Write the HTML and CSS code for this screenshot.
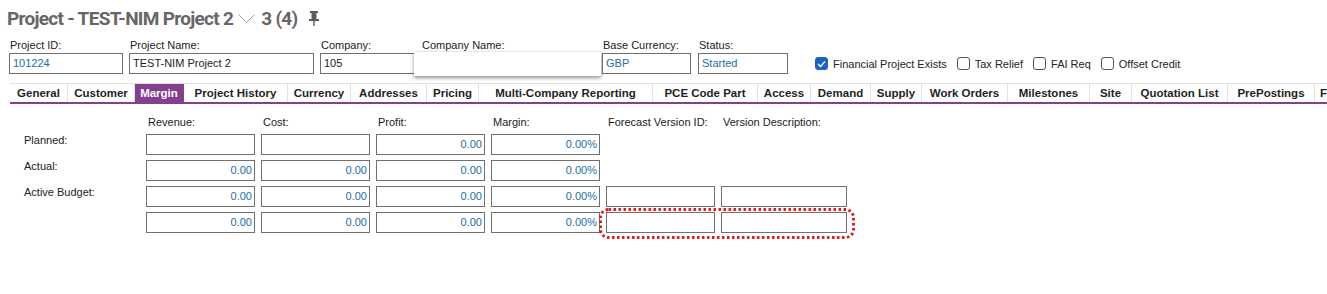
FILE: index.html
```html
<!DOCTYPE html>
<html lang="en">
<head>
<meta charset="utf-8"/>
<title>Project - TEST-NIM Project 2</title>
<link rel="stylesheet" href="styles.css">
</head>
<body>
<header class="title-bar">
    <h1 class="title">Project - TEST-NIM Project 2</h1>
    <svg class="chevron" width="17" height="10" viewBox="0 0 17 10"><polyline points="0.5,0.5 8.5,8.5 16.5,0.5" fill="none" stroke="#a0a0a0" stroke-width="1"/></svg>
    <span class="title">3 (4)</span>
    <svg class="pin" width="12" height="15" viewBox="0 0 12 15">
        <rect x="2" y="0" width="8" height="2" fill="#5a5a5a"/>
        <rect x="3.5" y="2" width="5" height="6" fill="#5a5a5a"/>
        <rect x="1" y="8" width="10" height="2" fill="#5a5a5a"/>
        <rect x="5.3" y="10" width="1.4" height="5" fill="#5a5a5a"/>
    </svg>
</header>

<section class="fields">
    <div class="field w-id">
        <label>Project ID:</label>
        <div class="box link">101224</div>
    </div>
    <div class="field w-name">
        <label>Project Name:</label>
        <div class="box">TEST-NIM Project 2</div>
    </div>
    <div class="field w-company">
        <label>Company:</label>
        <div class="box">105</div>
    </div>
    <div class="field w-compname">
        <label>Company Name:</label>
        <div class="box"></div>
        <div class="popup"></div>
    </div>
    <div class="field w-currency">
        <label>Base Currency:</label>
        <div class="box link">GBP</div>
    </div>
    <div class="field w-status">
        <label>Status:</label>
        <div class="box link">Started</div>
    </div>
    <div class="checks">
        <div class="check"><span class="tick on"><svg width="9" height="8" viewBox="0 0 9 8"><polyline points="1,4 3.5,6.5 8,1.5" fill="none" stroke="#fff" stroke-width="1.3"/></svg></span>Financial Project Exists</div>
        <div class="check"><span class="tick"></span>Tax Relief</div>
        <div class="check"><span class="tick"></span>FAI Req</div>
        <div class="check"><span class="tick"></span>Offset Credit</div>
    </div>
</section>

<nav class="tabs">
    <div class="tab">General</div>
    <div class="tab">Customer</div>
    <div class="tab active">Margin</div>
    <div class="tab">Project History</div>
    <div class="tab">Currency</div>
    <div class="tab">Addresses</div>
    <div class="tab">Pricing</div>
    <div class="tab">Multi-Company Reporting</div>
    <div class="tab">PCE Code Part</div>
    <div class="tab">Access</div>
    <div class="tab">Demand</div>
    <div class="tab">Supply</div>
    <div class="tab">Work Orders</div>
    <div class="tab">Milestones</div>
    <div class="tab">Site</div>
    <div class="tab">Quotation List</div>
    <div class="tab">PrePostings</div>
    <div class="tab tab-last">F</div>
</nav>

<section class="margin">
    <div class="grid">
        <div></div>
        <div class="col-head">Revenue:</div>
        <div class="col-head">Cost:</div>
        <div class="col-head">Profit:</div>
        <div class="col-head">Margin:</div>
        <div class="col-head">Forecast Version ID:</div>
        <div class="col-head">Version Description:</div>

        <div class="row-head">Planned:</div>
        <div class="box num"></div>
        <div class="box num"></div>
        <div class="box num">0.00</div>
        <div class="box num">0.00%</div>
        <div></div>
        <div></div>

        <div class="row-head">Actual:</div>
        <div class="box num">0.00</div>
        <div class="box num">0.00</div>
        <div class="box num">0.00</div>
        <div class="box num">0.00%</div>
        <div></div>
        <div></div>

        <div class="row-head">Active Budget:</div>
        <div class="box num">0.00</div>
        <div class="box num">0.00</div>
        <div class="box num">0.00</div>
        <div class="box num">0.00%</div>
        <div class="box"></div>
        <div class="box"></div>

        <div></div>
        <div class="box num">0.00</div>
        <div class="box num">0.00</div>
        <div class="box num">0.00</div>
        <div class="box num">0.00%</div>
        <div class="box"></div>
        <div class="box"></div>
    </div>
    <svg class="highlight" width="256" height="31" viewBox="0 0 256 31">
        <rect x="1.5" y="1.5" width="253" height="28" rx="8" ry="8" fill="none" stroke="#e01b1b" stroke-width="3" stroke-dasharray="2.5 2.5"/>
    </svg>
</section>
</body>
</html>
```

FILE: styles.css
```css
body {
    margin: 0;
    background: #fff;
    font-family: "Liberation Sans", Arial, sans-serif;
    font-size: 11px;
    color: #222;
}

/* Title */
.title-bar {
    display: flex;
    align-items: center;
    height: 36px;
    padding-left: 7px;
    color: #6b6b6b;
}
.title {
    margin: 0;
    font-family: Roboto, "Liberation Sans", sans-serif;
    font-size: 19px;
    letter-spacing: -0.7px;
    font-weight: bold;
    color: #666;
}
.chevron {
    margin: 2px 6px 0 5px;
}
.pin {
    margin-left: 10px;
}

/* Header fields */
.fields {
    display: flex;
    align-items: flex-end;
    gap: 6px;
    padding-left: 9px;
    margin-top: 3px;
}
.field {
    position: relative;
    display: flex;
    flex-direction: column;
    gap: 1px;
}
.field label {
    line-height: 13px;
    padding-left: 1px;
}
.w-id { width: 114px; }
.w-name { width: 185px; }
.w-company { width: 95px; }
.w-compname { width: 175px; }
.w-currency { width: 89px; }
.w-status { width: 90px; margin-left: 1px; }

.box {
    box-sizing: border-box;
    height: 21px;
    border: 1px solid #707070;
    background: #fff;
    padding: 0 3px;
    line-height: 19px;
    white-space: nowrap;
    overflow: hidden;
}
.link {
    color: #1c6ea4;
}
.popup {
    position: absolute;
    left: -7px;
    bottom: -2px;
    width: 187px;
    height: 24px;
    background: #fff;
    box-shadow: 0 2px 4px rgba(0, 0, 0, 0.4), 1px 0 2px rgba(0, 0, 0, 0.15);
}

.checks {
    display: flex;
    align-items: center;
    gap: 10px;
    height: 21px;
    margin-left: 21px;
}
.check {
    display: flex;
    align-items: center;
    gap: 5px;
}
.tick {
    box-sizing: border-box;
    width: 13px;
    height: 13px;
    border: 1px solid #555;
    border-radius: 3px;
    display: flex;
    align-items: center;
    justify-content: center;
}
.tick.on {
    background: #1d62c2;
    border-color: #1d62c2;
}

/* Tabs */
.tabs {
    display: grid;
    grid-template-columns: 58px 67px 49px 104px 63px 76px 52px 174px 105px 53px 60px 51px 86px 82px 42px 96px 87px 1fr;
    margin: 9px 0 0 10px;
    border-top: 1px solid #e2e2e2;
    border-bottom: 2px solid #843f8d;
}
.tab {
    height: 18px;
    line-height: 18px;
    text-align: center;
    font-weight: bold;
    font-size: 11.5px;
    color: #1f1f1f;
    border-right: 1px solid #e2e2e2;
    white-space: nowrap;
    overflow: hidden;
}
.tab.active {
    background: #843f8d;
    color: #fff;
    border-right-color: #843f8d;
}
.tab-last {
    text-align: left;
    padding-left: 5px;
    border-right: none;
}

/* Margin tab content */
.margin {
    position: relative;
    padding: 12px 0 40px 24px;
}
.grid {
    display: grid;
    grid-template-columns: 116px 109px 109px 109px 109px 109px 126px;
    grid-template-rows: 13px 21px 21px 21px 22px;
    column-gap: 6px;
    row-gap: 5px;
}
.col-head {
    line-height: 13px;
    padding-left: 2px;
    white-space: nowrap;
}
.row-head {
    line-height: 13px;
}
.num {
    text-align: right;
    color: #1c6ea4;
    padding-right: 2px;
}
.highlight {
    position: absolute;
    left: 599px;
    top: 104px;
}
```
